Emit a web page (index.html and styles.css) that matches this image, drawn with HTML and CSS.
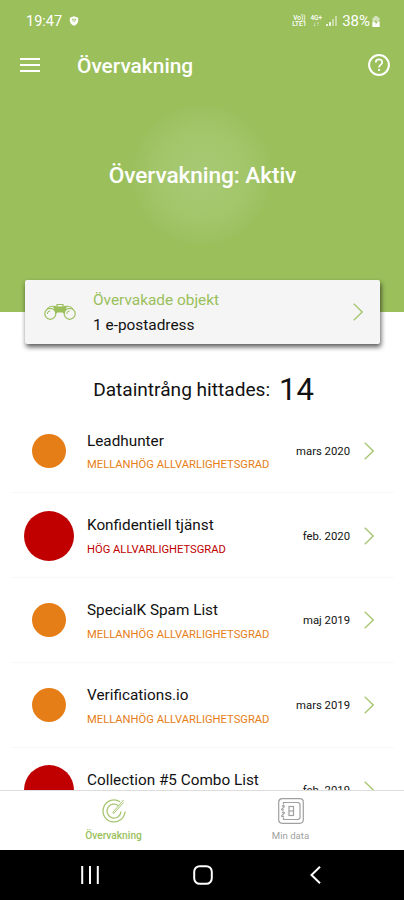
FILE: index.html
```html
<!DOCTYPE html>
<html lang="sv">
    <head>
        <meta charset="UTF-8" />
        <meta name="viewport" content="width=device-width, initial-scale=1.0" />
        <title>Övervakning</title>
        <link rel="stylesheet" href="styles.css">
    </head>
    <body>
        <div class="screen">
            <header class="hero">
                <div class="status-bar">
                    <span class="time">19:47</span>
                    <svg class="shield" width="10" height="10" viewBox="0 0 10 11">
                        <path d="M5 0.3 9.6 1.8V5C9.6 7.8 7.6 9.8 5 10.7 2.4 9.8 0.4 7.8 0.4 5V1.8Z" fill="#fff" />
                        <path d="M2.8 3.5H7.2L5 6.5Z" fill="none" stroke="#9abf5b" stroke-width="0.9" />
                    </svg>
                    <div class="status-right">
                        <span class="network">Vo))<br>LTE1</span>
                        <span class="network">4G+<br>↓↑</span>
                        <svg class="signal" width="11" height="10" viewBox="0 0 11 10">
                            <path d="M0 8h2v2H0zM3 6h2v4H3z" fill="#fff" opacity="0.8" />
                            <path d="M6 3h2v7H6zM9 0h2v10H9z" fill="#fff" opacity="0.45" />
                        </svg>
                        <span class="battery-level">38%</span>
                        <svg class="battery" width="8" height="11" viewBox="0 0 8 11">
                            <path d="M2.5 0h3v1.5H7.5V11H0.5V1.5h2z" fill="#fff" opacity="0.6" />
                            <path d="M0.5 6h7v5h-7z" fill="#fff" />
                            <path d="M4.5 3 2.2 6.5H4L3.5 9 5.8 5.6H4z" fill="#9abf5b" />
                        </svg>
                    </div>
                </div>

                <div class="app-bar">
                    <svg class="menu-icon" width="20" height="14" viewBox="0 0 20 14">
                        <path d="M0 1h20M0 7h20M0 13h20" stroke="#fff" stroke-width="1.8" />
                    </svg>
                    <h1>Övervakning</h1>
                    <svg class="help-icon" width="22" height="22" viewBox="0 0 22 22" fill="none" stroke="#fff">
                        <circle cx="11" cy="11" r="9.9" stroke-width="2" />
                        <path d="M7.8 8.5C7.8 6.6 9.1 5.3 11 5.3S14.2 6.6 14.2 8.4C14.2 10.6 11 10.9 11 13.6" stroke-width="1.7" />
                        <path d="M11 15v2" stroke-width="1.8" />
                    </svg>
                </div>

                <div class="radar">
                    <p class="radar-text">Övervakning: Aktiv</p>
                </div>
            </header>

            <main>
                <div class="monitored-card">
                    <svg class="binoculars" width="32" height="18" viewBox="0 0 32 18" fill="none" stroke="#9abf5b">
                        <circle cx="6.3" cy="10.8" r="5.5" stroke-width="1.2" />
                        <circle cx="25.7" cy="10.8" r="5.5" stroke-width="1.2" />
                        <path d="M3.3 11A3.2 3.2 0 0 1 6.3 7.8M22.7 11A3.2 3.2 0 0 1 25.7 7.8" />
                        <path d="M3 5.8C5 3.5 7.5 2.8 12 3.5M29 5.8C27 3.5 24.5 2.8 20 3.5" />
                        <path d="M9 3.5H23L20.2 11 18.5 9.5H13.5L11.8 11Z" fill="#9abf5b" stroke="none" />
                        <path d="M13 4V1.5H19V4" stroke-width="1.2" />
                    </svg>
                    <div class="card-text">
                        <div class="card-title">Övervakade objekt</div>
                        <div class="card-value">1 e-postadress</div>
                    </div>
                    <svg class="chevron" width="10" height="18" viewBox="0 0 10 18">
                        <path d="M0.7 0.7 9.2 9 0.7 17.3" />
                    </svg>
                </div>

                <h2 class="summary">Dataintrång hittades: <span class="count">14</span></h2>

                <ul class="breaches">
                    <li class="breach medium">
                        <span class="marker"><span class="dot"></span></span>
                        <div class="breach-text">
                            <div class="name">Leadhunter</div>
                            <div class="severity">MELLANHÖG ALLVARLIGHETSGRAD</div>
                        </div>
                        <span class="date">mars 2020</span>
                        <svg class="chevron" width="10" height="18" viewBox="0 0 10 18"><path d="M0.7 0.7 9.2 9 0.7 17.3" /></svg>
                    </li>
                    <li class="breach high">
                        <span class="marker"><span class="dot"></span></span>
                        <div class="breach-text">
                            <div class="name">Konfidentiell tjänst</div>
                            <div class="severity">HÖG ALLVARLIGHETSGRAD</div>
                        </div>
                        <span class="date">feb. 2020</span>
                        <svg class="chevron" width="10" height="18" viewBox="0 0 10 18"><path d="M0.7 0.7 9.2 9 0.7 17.3" /></svg>
                    </li>
                    <li class="breach medium">
                        <span class="marker"><span class="dot"></span></span>
                        <div class="breach-text">
                            <div class="name">SpecialK Spam List</div>
                            <div class="severity">MELLANHÖG ALLVARLIGHETSGRAD</div>
                        </div>
                        <span class="date">maj 2019</span>
                        <svg class="chevron" width="10" height="18" viewBox="0 0 10 18"><path d="M0.7 0.7 9.2 9 0.7 17.3" /></svg>
                    </li>
                    <li class="breach medium">
                        <span class="marker"><span class="dot"></span></span>
                        <div class="breach-text">
                            <div class="name">Verifications.io</div>
                            <div class="severity">MELLANHÖG ALLVARLIGHETSGRAD</div>
                        </div>
                        <span class="date">mars 2019</span>
                        <svg class="chevron" width="10" height="18" viewBox="0 0 10 18"><path d="M0.7 0.7 9.2 9 0.7 17.3" /></svg>
                    </li>
                    <li class="breach high">
                        <span class="marker"><span class="dot"></span></span>
                        <div class="breach-text">
                            <div class="name">Collection #5 Combo List</div>
                            <div class="severity">HÖG ALLVARLIGHETSGRAD</div>
                        </div>
                        <span class="date">feb. 2019</span>
                        <svg class="chevron" width="10" height="18" viewBox="0 0 10 18"><path d="M0.7 0.7 9.2 9 0.7 17.3" /></svg>
                    </li>
                </ul>
            </main>

            <nav class="tabs">
                <a class="tab active">
                    <svg width="26" height="26" viewBox="0 0 26 26" fill="none" stroke="#a6c670" stroke-width="1.3">
                        <path d="M19 3.7A11 11 0 1 0 24 13.5" />
                        <path d="M17.5 7.7A7 7 0 1 0 20 13.5" />
                        <path d="M22.5 2 12.5 13.5Q11 15.5 13 15.2L22.5 4.5" stroke-width="1" />
                    </svg>
                    <span>Övervakning</span>
                </a>
                <a class="tab">
                    <svg width="26" height="26" viewBox="0 0 26 26" fill="none" stroke="#a0a0a0" stroke-width="1.2">
                        <rect x="0.7" y="0.7" width="24.6" height="24.6" rx="3.5" />
                        <path d="M5.5 6.5V4.5H20.5L22 6V20L20.5 21.5H5.5V19.5" />
                        <path d="M4 8.5c2-2 3.5 0 1 1.5s-1 3 1 1.5M4 15c2-2 3.5 0 1 1.5s-1 3 1 1.5" />
                        <rect x="11" y="8.5" width="4.5" height="9" />
                        <path d="M11 13h4.5" />
                    </svg>
                    <span>Min data</span>
                </a>
            </nav>

            <div class="system-bar">
                <svg width="18" height="18" viewBox="0 0 18 18" stroke="#fff" stroke-width="2">
                    <path d="M1.2 0v18M9 0v18M16.8 0v18" />
                </svg>
                <svg width="20" height="20" viewBox="0 0 20 20" fill="none" stroke="#fff" stroke-width="2">
                    <rect x="1.2" y="1.2" width="17.6" height="17.6" rx="5.5" />
                </svg>
                <svg width="11" height="18" viewBox="0 0 11 18" fill="none" stroke="#fff" stroke-width="2">
                    <path d="M10 0.8 1.5 9 10 17.2" />
                </svg>
            </div>
        </div>
    </body>
</html>
```
FILE: styles.css
```css
* {
    box-sizing: border-box;
}
body {
    font-family: Roboto, sans-serif;
    margin: 0;
    background: #fff;
    color: #111;
}
h1,
h2,
p,
ul {
    margin: 0;
    padding: 0;
}
svg {
    display: block;
    flex: none;
}
.screen {
    display: flex;
    flex-direction: column;
    height: 900px;
    max-width: 404px;
    overflow: hidden;
}

.hero {
    flex: none;
    height: 312px;
    background: #9abf5b;
    color: #fff;
}
.status-bar {
    display: flex;
    align-items: center;
    height: 42px;
    padding: 0 24px 0 26px;
    font-size: 14.5px;
}
.shield {
    margin-left: 7px;
}
.status-right {
    display: flex;
    align-items: center;
    margin-left: auto;
}
.network {
    margin-right: 4px;
    font-size: 6.5px;
    font-weight: 500;
    line-height: 6.5px;
    text-align: center;
}
.battery-level {
    margin: 0 2px 0 5px;
    font-size: 15px;
}
.app-bar {
    display: flex;
    align-items: center;
    height: 46px;
    padding: 0 14px 0 20px;
}
.app-bar h1 {
    margin-left: 37px;
    padding-top: 1px;
    font-size: 20.9px;
    font-weight: 500;
}
.help-icon {
    margin-left: auto;
}
.radar {
    display: flex;
    align-items: center;
    justify-content: center;
    width: 142px;
    height: 142px;
    margin: 16px auto 0;
    border-radius: 50%;
    background: radial-gradient(circle closest-side, #a8c974 0%, #a3c66b 60%, #9dc160 92%, #9abf5b 100%);
}
.radar-text {
    padding-left: 1px;
    font-size: 22.7px;
    font-weight: 500;
    letter-spacing: -0.1px;
    white-space: nowrap;
}

main {
    flex: 1;
    min-height: 0;
}
.monitored-card {
    display: flex;
    align-items: center;
    height: 64px;
    margin: -32px 24px 0 25px;
    padding: 0 17px 0 19px;
    background: #f5f5f5;
    border-radius: 2px;
    box-shadow: 1px 3px 5px rgba(0, 0, 0, 0.65);
}
.card-text {
    flex: 1;
    margin-left: 17px;
    padding-top: 2px;
    font-size: 15.4px;
    line-height: 25px;
}
.card-title {
    color: #9abf5b;
}
.chevron path {
    fill: none;
    stroke: #a6c670;
    stroke-width: 1.3;
}

.summary {
    display: flex;
    align-items: center;
    justify-content: center;
    height: 64px;
    padding: 26px 0 0 3px;
    font-size: 19.1px;
    font-weight: 400;
}
.count {
    margin-left: 9px;
    font-size: 31px;
}

.breaches {
    padding-top: 0.5px;
    list-style: none;
}
.breach {
    display: flex;
    align-items: center;
    height: 84.8px;
    margin: 0 10px;
    padding: 1px 20px 0 14px;
    border-bottom: 1px solid #f8f8f8;
}
.marker {
    display: flex;
    justify-content: center;
    width: 50px;
}
.dot {
    width: 34px;
    height: 34px;
    border-radius: 50%;
    background: #e67e17;
}
.high .dot {
    width: 50px;
    height: 50px;
    background: #c00000;
}
.breach-text {
    flex: 1;
    margin-left: 13px;
    padding-top: 4px;
    line-height: 24px;
}
.name {
    font-size: 15.3px;
}
.severity {
    padding-top: 0.5px;
    color: #e67e17;
    font-size: 11.2px;
}
.high .severity {
    color: #c00000;
}
.date {
    margin-right: 14px;
    padding-top: 1px;
    font-size: 11.3px;
}

.tabs {
    display: flex;
    flex: none;
    position: relative;
    height: 60px;
    padding: 0 25px;
    background: #fff;
    border-top: 1px solid #ddd;
}
.tab {
    display: flex;
    flex: 1;
    flex-direction: column;
    align-items: center;
    padding-top: 7px;
    color: #a0a0a0;
    font-size: 9.6px;
}
.tab span {
    margin-top: 6px;
}
.tab.active {
    color: #9abf5b;
    font-size: 10.2px;
    font-weight: 500;
}

.system-bar {
    display: flex;
    flex: none;
    align-items: center;
    justify-content: space-between;
    position: relative;
    height: 50px;
    padding: 0 83px 0 81px;
    background: #000;
}
.system-bar svg:nth-child(2) {
    margin-right: 4px;
}
```
